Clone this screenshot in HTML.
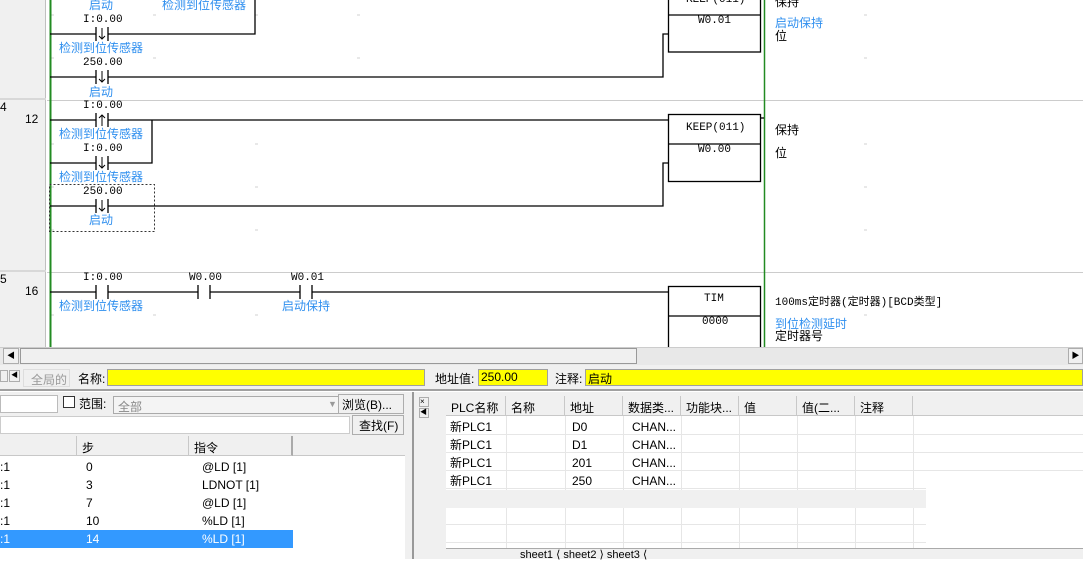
<!DOCTYPE html>
<html><head><meta charset="utf-8"><style>
*{margin:0;padding:0;box-sizing:border-box}
body{width:1083px;height:559px;overflow:hidden;background:#fff;position:relative;font-family:"Liberation Sans","Noto Sans CJK SC",sans-serif;font-size:12px;color:#000}
.a{position:absolute;white-space:nowrap}
.m{font-family:"Liberation Mono","Noto Sans CJK SC",monospace;font-size:11px}
.b{color:#2f8fef}
.y{background:#ffff00;border:1px solid #a0a0a0}
.btn{background:#f0f0f0;border:1px solid #adadad}
.hd{background:#f0f0f0;border-right:1px solid #c8c8c8;border-bottom:1px solid #c8c8c8;height:20px;padding:3px 5px}
</style></head><body>
<div class="a" style="left:0;top:0;width:46px;height:347px;background:#f0f0f0;border-right:1px solid #c0c0c0"></div>
<div class="a" style="left:0;top:98px;width:46px;height:2px;background:#d8d8d8"></div>
<div class="a" style="left:0;top:270px;width:46px;height:2px;background:#d8d8d8"></div>
<svg class="a" style="left:0;top:0" width="1083" height="347">
<g stroke="#ccc" stroke-width="1">
<line x1="47" y1="100.5" x2="1083" y2="100.5"/><line x1="47" y1="272.5" x2="1083" y2="272.5"/>
</g>
<g stroke="#d0d0d0"><path d="M51 15h3M153 15h3M255 15h3M357 15h3M51 58h3M153 58h3M357 58h3M51 144h3M255 144h3M51 187h3M255 187h3M51 230h3M255 230h3M51 315h3M153 315h3M255 315h3M864 15h3M864 58h3M864 144h3M864 187h3M864 230h3M864 315h3"/></g>
<line x1="50.5" y1="0" x2="50.5" y2="347" stroke="#228b22" stroke-width="2"/>
<line x1="764.5" y1="0" x2="764.5" y2="347" stroke="#228b22" stroke-width="1.5"/>
<g stroke="#000" stroke-width="1.3" fill="none">
<path d="M50 34H96M108 34H255V0"/><path d="M96 27v14M108 27v14"/>
<path d="M50 77H96M108 77H663V34H668"/><path d="M96 70v14M108 70v14"/>
<path d="M50 120H96M108 120H668"/><path d="M96 113v14M108 113v14"/>
<path d="M50 163H96M108 163H152V120"/><path d="M96 156v14M108 156v14"/>
<path d="M50 206H96M108 206H663V163H668"/><path d="M96 199v14M108 199v14"/>
<path d="M50 292H96M108 292H198M210 292H300M312 292H668"/><path d="M96 285v14M108 285v14M198 285v14M210 285v14M300 285v14M312 285v14"/>
<rect x="668.5" y="-10" width="92" height="62"/><path d="M668 15H760"/>
<rect x="668.5" y="114.5" width="92" height="67"/><path d="M668 144H760"/>
<rect x="668.5" y="286.5" width="92" height="70"/><path d="M668 316H760"/>
<path d="M760 118H764"/>
</g>
<g stroke="#000" stroke-width="1" fill="none">
<path d="M102 28v11M99 36l3 3 3-3M102 71v11M99 79l3 3 3-3M102 115v11M99 118l3-3 3 3M102 157v11M99 165l3 3 3-3M102 200v11M99 208l3 3 3-3"/>
</g>
<rect x="49.5" y="184.5" width="105" height="47" fill="none" stroke="#333" stroke-dasharray="2 2"/>
</svg>
<div class="a m" style="left:686px;top:-6px">KEEP(011)</div>
<div class="a m" style="left:83px;top:14px">I:0.00</div>
<div class="a b" style="left:89px;top:-4px">启动</div>
<div class="a b" style="left:162px;top:-4px">检测到位传感器</div>
<div class="a b" style="left:59px;top:39px">检测到位传感器</div>
<div class="a m" style="left:83px;top:57px">250.00</div>
<div class="a b" style="left:89px;top:83px">启动</div>
<div class="a" style="left:0;top:100px">4</div>
<div class="a" style="left:25px;top:112px">12</div>
<div class="a m" style="left:83px;top:100px">I:0.00</div>
<div class="a b" style="left:59px;top:125px">检测到位传感器</div>
<div class="a m" style="left:83px;top:143px">I:0.00</div>
<div class="a b" style="left:59px;top:168px">检测到位传感器</div>
<div class="a m" style="left:83px;top:186px">250.00</div>
<div class="a b" style="left:89px;top:211px">启动</div>
<div class="a" style="left:0;top:272px">5</div>
<div class="a" style="left:25px;top:284px">16</div>
<div class="a m" style="left:83px;top:272px">I:0.00</div>
<div class="a m" style="left:189px;top:272px">W0.00</div>
<div class="a m" style="left:291px;top:272px">W0.01</div>
<div class="a b" style="left:59px;top:297px">检测到位传感器</div>
<div class="a b" style="left:282px;top:297px">启动保持</div>
<div class="a m" style="left:698px;top:15px">W0.01</div>
<div class="a m" style="left:686px;top:122px">KEEP(011)</div>
<div class="a m" style="left:698px;top:144px">W0.00</div>
<div class="a m" style="left:704px;top:293px">TIM</div>
<div class="a m" style="left:702px;top:316px">0000</div>
<div class="a" style="left:775px;top:-7px">保持</div>
<div class="a b" style="left:775px;top:14px">启动保持</div>
<div class="a" style="left:775px;top:27px">位</div>
<div class="a" style="left:775px;top:121px">保持</div>
<div class="a" style="left:775px;top:144px">位</div>
<div class="a m" style="left:775px;top:293px">100ms定时器(定时器)[BCD类型]</div>
<div class="a b" style="left:775px;top:315px">到位检测延时</div>
<div class="a" style="left:775px;top:327px">定时器号</div>
<!-- hscroll -->
<div class="a" style="left:0;top:347px;width:1083px;height:18px;background:#e8e8e8;border-top:1px solid #ccc"></div>
<div class="a btn" style="left:3px;top:348px;width:16px;height:16px;font-size:8px;text-align:center;line-height:14px">◀</div>
<div class="a" style="left:20px;top:348px;width:617px;height:16px;background:#f0f0f0;border:1px solid #999"></div>
<div class="a btn" style="left:1068px;top:348px;width:15px;height:16px;font-size:8px;text-align:center;line-height:14px">▶</div>
<!-- toolbar -->
<div class="a" style="left:0;top:365px;width:1083px;height:26px;background:#f0f0f0;border-bottom:2px solid #a0a0a0"></div>
<div class="a btn" style="left:0;top:370px;width:8px;height:12px"></div>
<div class="a btn" style="left:9px;top:370px;width:11px;height:12px;font-size:7px;line-height:10px;text-align:center">◀</div>
<div class="a" style="left:23px;top:369px;width:47px;height:18px;border:1px solid #ddd;color:#999;padding:1px 7px">全局的</div>
<div class="a" style="left:78px;top:370px">名称:</div>
<div class="a y" style="left:107px;top:369px;width:318px;height:17px"></div>
<div class="a" style="left:435px;top:370px">地址值:</div>
<div class="a y" style="left:478px;top:369px;width:70px;height:17px;padding-left:2px">250.00</div>
<div class="a" style="left:555px;top:370px">注释:</div>
<div class="a y" style="left:585px;top:369px;width:498px;height:17px;padding-left:2px">启动</div>
<!-- lower left -->
<div class="a" style="left:0;top:392px;width:420px;height:167px;background:#f0f0f0"></div>
<div class="a" style="left:0;top:395px;width:58px;height:18px;background:#fff;border:1px solid #bbb"></div>
<div class="a" style="left:63px;top:396px;width:12px;height:12px;background:#fff;border:1px solid #333"></div>
<div class="a" style="left:79px;top:395px">范围:</div>
<div class="a" style="left:113px;top:396px;width:232px;height:18px;background:#f4f4f4;border:1px solid #aaa;color:#888;padding:1px 4px">全部</div>
<div class="a" style="left:328px;top:399px;color:#999;font-size:9px">▼</div>
<div class="a btn" style="left:338px;top:394px;width:66px;height:20px;padding:1px 3px">浏览(B)...</div>
<div class="a" style="left:0;top:416px;width:350px;height:18px;background:#fff;border:1px solid #ccc"></div>
<div class="a btn" style="left:352px;top:415px;width:52px;height:20px;padding:1px 6px">查找(F)</div>
<div class="a" style="left:0;top:436px;width:405px;height:123px;background:#fff"></div>
<div class="a hd" style="left:0;top:436px;width:77px"></div>
<div class="a hd" style="left:77px;top:436px;width:112px">步</div>
<div class="a hd" style="left:189px;top:436px;width:104px;border-right:2px solid #aaa">指令</div>
<div class="a" style="left:293px;top:436px;width:112px;height:20px;border-bottom:1px solid #c8c8c8;background:#f0f0f0"></div>
<div class="a" style="left:0;top:530px;width:293px;height:18px;background:#3399ff"></div>
<div class="a" style="left:0;top:458px;line-height:18px">:1<br>:1<br>:1<br>:1<br><span style="color:#fff">:1</span></div>
<div class="a" style="left:86px;top:458px;line-height:18px">0<br>3<br>7<br>10<br><span style="color:#fff">14</span></div>
<div class="a" style="left:202px;top:458px;line-height:18px">@LD [1]<br>LDNOT [1]<br>@LD [1]<br>%LD [1]<br><span style="color:#fff">%LD [1]</span></div>
<div class="a" style="left:405px;top:392px;width:7px;height:167px;background:#f0f0f0"></div>
<div class="a" style="left:412px;top:392px;width:2px;height:167px;background:#999"></div>
<!-- right panel -->
<div class="a" style="left:414px;top:392px;width:669px;height:167px;background:#f0f0f0"></div>
<div class="a btn" style="left:419px;top:397px;width:10px;height:10px;font-size:8px;line-height:8px">×</div>
<div class="a btn" style="left:419px;top:408px;width:10px;height:10px;font-size:7px;line-height:8px">◀</div>
<div class="a" style="left:432px;top:396px;width:651px;height:152px;background:#fff;border-left:1px solid #999"></div>
<div class="a hd" style="left:446px;top:396px;width:60px">PLC名称</div>
<div class="a hd" style="left:506px;top:396px;width:59px">名称</div>
<div class="a hd" style="left:565px;top:396px;width:58px">地址</div>
<div class="a hd" style="left:623px;top:396px;width:58px">数据类...</div>
<div class="a hd" style="left:681px;top:396px;width:58px">功能块...</div>
<div class="a hd" style="left:739px;top:396px;width:58px">值</div>
<div class="a hd" style="left:797px;top:396px;width:58px">值(二...</div>
<div class="a hd" style="left:855px;top:396px;width:58px">注释</div>
<div class="a" style="left:913px;top:396px;width:170px;height:20px;background:#f0f0f0;border-bottom:1px solid #c8c8c8"></div>
<div class="a" style="left:432px;top:396px;width:14px;height:152px;background:#f0f0f0"></div>
<svg class="a" style="left:446px;top:416px" width="637" height="132"><g stroke="#e6e6e6"><path d="M0 18.5H637M0 36.5H637M0 54.5H637M0 72.5H480M0 90.5H480M0 108.5H480M0 126.5H480M60.5 0V132M119.5 0V132M177.5 0V132M235.5 0V132M293.5 0V132M351.5 0V132M409.5 0V132M467.5 0V132"/></g><rect x="0" y="74" width="480" height="18" fill="#f0f0f0"/></svg>
<div class="a" style="left:450px;top:418px;line-height:18px">新PLC1<br>新PLC1<br>新PLC1<br>新PLC1</div>
<div class="a" style="left:572px;top:418px;line-height:18px">D0<br>D1<br>201<br>250</div>
<div class="a" style="left:632px;top:418px;line-height:18px">CHAN...<br>CHAN...<br>CHAN...<br>CHAN...</div>
<div class="a" style="left:446px;top:548px;width:637px;height:11px;background:#f0f0f0;border-top:1px solid #aaa"></div>
<div class="a" style="left:520px;top:548px;font-size:11px">sheet1 ⟨ sheet2 ⟩ sheet3 ⟨</div>
</body></html>
